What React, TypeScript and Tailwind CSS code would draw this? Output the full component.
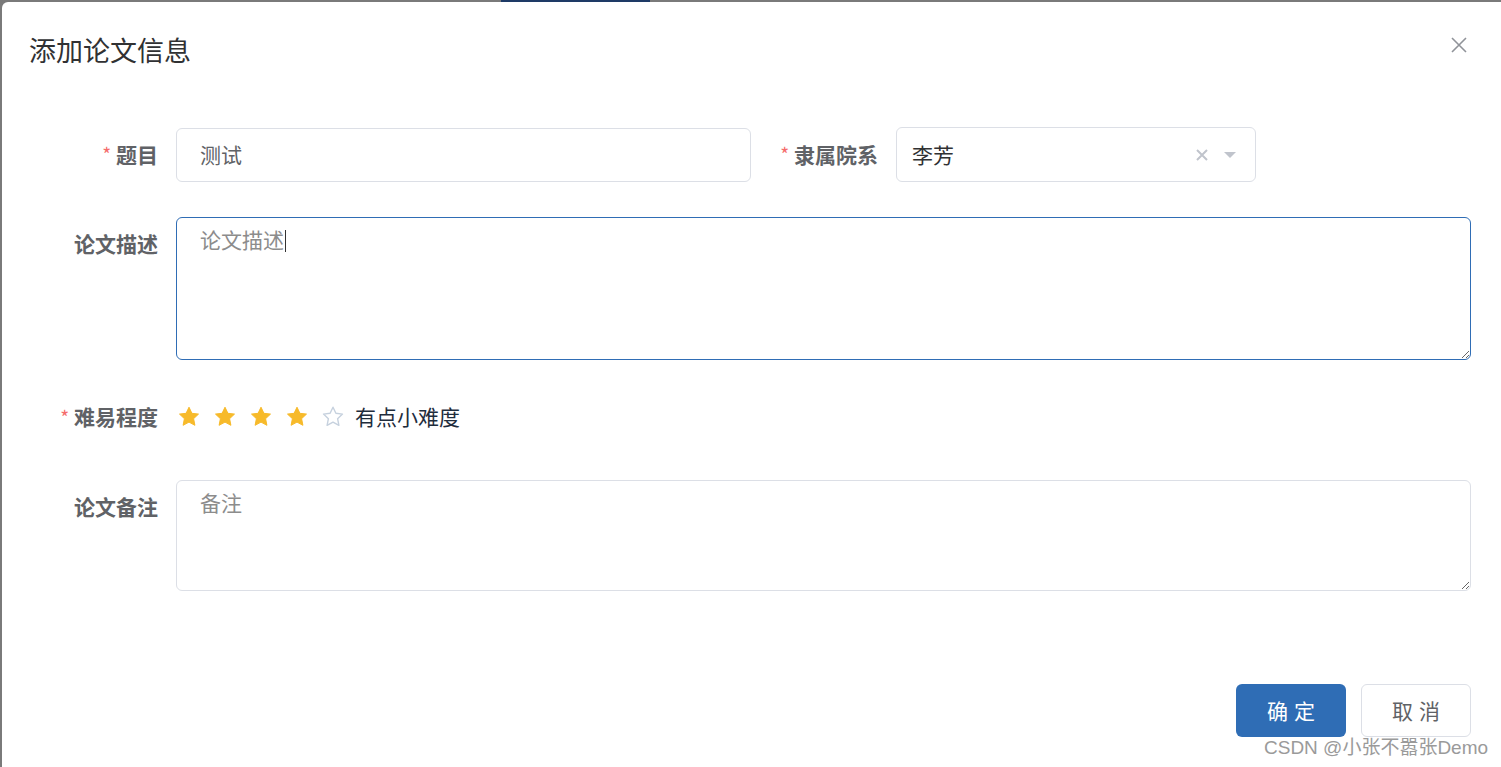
import React from "react";

const FONT = '"Noto Sans CJK SC", "Noto Sans", "Liberation Sans", sans-serif';

function Star({ filled }: { filled: boolean }) {
  return (
    <svg width="24" height="24" viewBox="0 0 24 24" className="block">
      <path
        d="M12 2.2l2.9 6.1 6.6.8-4.9 4.6 1.3 6.6L12 17.1l-5.9 3.2 1.3-6.6-4.9-4.6 6.6-.8z"
        fill={filled ? "#f7ba2a" : "none"}
        stroke={filled ? "#f7ba2a" : "#c6d1de"}
        strokeWidth={filled ? 1 : 1.4}
        strokeLinejoin="round"
      />
    </svg>
  );
}

function Label({ text, required, width, top }: { text: string; required?: boolean; width: string; top?: boolean }) {
  return (
    <div
      className={`${width} shrink-0 pr-[18px] flex justify-end ${top ? "items-start" : "items-center"} h-[54px] text-[21px] font-bold text-[#606266]`}
    >
      {required && <span className="text-[#f56c6c] mr-[5px] text-[19px] font-normal">*</span>}
      <span>{text}</span>
    </div>
  );
}

export default function App() {
  return (
    <div className="w-[1501px] h-[767px] overflow-hidden bg-[#7a7a7a] relative" style={{ fontFamily: FONT }}>
      <div className="flex h-[2px]">
        <div className="w-[501px] bg-[#7a7a7a]" />
        <div className="w-[149px] bg-[#1e3a66]" />
        <div className="flex-1 bg-[#7a7a7a]" />
      </div>
      <div className="ml-[2px] h-[765px] bg-white rounded-tl-[6px] flex flex-col">
        {/* header */}
        <div className="flex items-start justify-between pt-[28px] pl-[27px] pr-[33px]">
          <div className="text-[27px] leading-[40px] text-[#303133]">添加论文信息</div>
          <svg width="18" height="18" viewBox="0 0 18 18" className="mt-[6px]">
            <path d="M2 2L16 16M16 2L2 16" stroke="#909399" strokeWidth="1.6" />
          </svg>
        </div>

        {/* form */}
        <div className="flex flex-col pt-[57px] pr-[30px]">
          <div className="flex items-center">
            <Label text="题目" required width="w-[174px]" />
            <div className="w-[575px] h-[54px] border border-[#dcdfe6] rounded-[6px] flex items-center pl-[23px] text-[21px] text-[#606266]">
              测试
            </div>
            <Label text="隶属院系" required width="w-[145px]" />
            <div className="w-[360px] h-[55px] border border-[#dcdfe6] rounded-[6px] flex items-center pl-[15px] pr-[18px] text-[21px] text-[#303133]">
              <span className="flex-1">李芳</span>
              <svg width="14" height="14" viewBox="0 0 14 14" className="mr-[14px]">
                <path d="M2 2L12 12M12 2L2 12" stroke="#c0c4cc" strokeWidth="2" />
              </svg>
              <svg width="14" height="10" viewBox="0 0 14 10">
                <path d="M1 2h12L7 8z" fill="#c0c4cc" />
              </svg>
            </div>
          </div>

          <div className="flex mt-[35px]">
            <Label text="论文描述" width="w-[174px]" />
            <div className="flex-1 relative">
              <textarea
                className="block w-full h-[143px] border border-[#2f6db5] rounded-[6px] px-[23px] pt-[5px] text-[21px] leading-[32px] text-[#606266] placeholder:text-[#8c8c8c] outline-none resize-y"
                style={{ fontFamily: FONT }}
                placeholder="论文描述"
              />
              <div className="absolute left-[109px] top-[13px] w-[1px] h-[22px] bg-[#333]" />
            </div>
          </div>

          <div className="flex items-center mt-[30px]">
            <Label text="难易程度" required width="w-[174px]" />
            <div className="flex items-center gap-[12px] pl-[1px]">
              <Star filled />
              <Star filled />
              <Star filled />
              <Star filled />
              <Star filled={false} />
            </div>
            <span className="ml-[10px] text-[21px] text-[#1f2d3d]">有点小难度</span>
          </div>

          <div className="flex mt-[36px]">
            <Label text="论文备注" width="w-[174px]" />
            <textarea
              className="block flex-1 h-[111px] border border-[#dcdfe6] rounded-[6px] px-[23px] pt-[5px] text-[21px] leading-[32px] text-[#606266] placeholder:text-[#8c8c8c] outline-none resize-y"
              style={{ fontFamily: FONT }}
              placeholder="备注"
            />
          </div>
        </div>

        {/* footer */}
        <div className="flex justify-end gap-[15px] pr-[30px] mt-[93px]">
          <button className="w-[110px] h-[53px] rounded-[6px] bg-[#2f6db5] text-white text-[21px] tracking-[6px] pl-[6px]">
            确定
          </button>
          <button className="w-[110px] h-[53px] rounded-[6px] border border-[#dcdfe6] bg-white text-[#606266] text-[21px] tracking-[6px] pl-[6px]">
            取消
          </button>
        </div>
      </div>
      <div
        className="absolute left-[1264px] top-[734px] text-[19px] text-[#9a9a9a] whitespace-nowrap"
        style={{ fontFamily: '"Liberation Sans", "Noto Sans CJK SC", sans-serif' }}
      >
        CSDN @小张不嚣张Demo
      </div>
    </div>
  );
}
